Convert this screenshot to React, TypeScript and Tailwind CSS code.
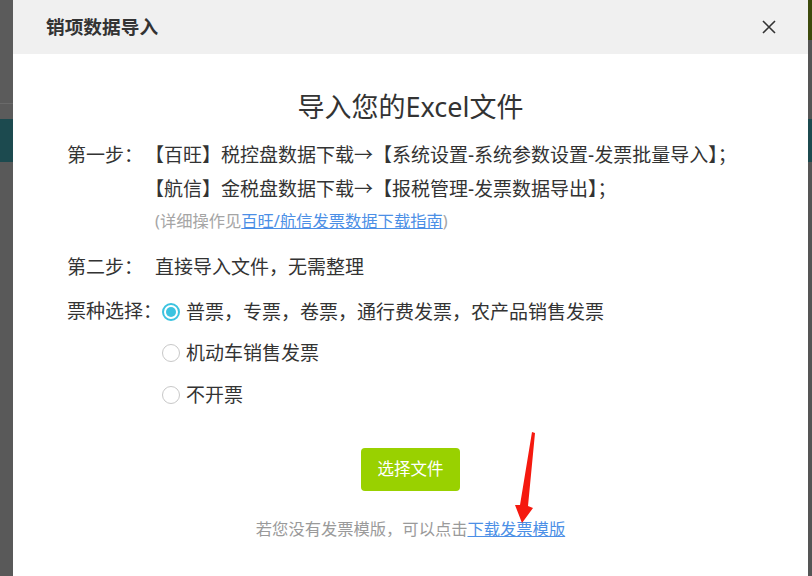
import React from "react";

const font = { fontFamily: '"Noto Sans", "Noto Sans CJK SC", sans-serif' };

function Radio({ checked }: { checked?: boolean }) {
  return checked ? (
    <span className="w-[18px] h-[18px] rounded-full border-2 border-[#3cc3e0] flex items-center justify-center shrink-0">
      <span className="w-[10px] h-[10px] rounded-full bg-[#3cc3e0]"></span>
    </span>
  ) : (
    <span className="w-[18px] h-[18px] rounded-full border border-[#c8c8c8] bg-white shrink-0"></span>
  );
}

export default function App() {
  const options = [
    { label: "普票，专票，卷票，通行费发票，农产品销售发票", checked: true },
    { label: "机动车销售发票" },
    { label: "不开票" },
  ];

  return (
    <div
      className="relative w-[812px] h-[576px] overflow-hidden flex bg-[#575757]"
      style={font}
    >
      {/* page behind the overlay */}
      <div className="w-[13px] flex flex-col">
        <div className="h-[103px] bg-[#5b5b5b]"></div>
        <div className="h-px bg-[#6a6a6a]"></div>
        <div className="h-[15px] bg-[#5b5b5b]"></div>
        <div className="h-[43px] bg-[#1c4a4f]"></div>
        <div className="flex-1 bg-[#595959]"></div>
      </div>

      <div className="w-[795px] bg-white flex flex-col text-[#333]">
        <div className="h-[54px] bg-[#f0f0f0] flex items-center justify-between pl-[33px] pr-[31px]">
          <span className="text-[18.7px] font-bold">销项数据导入</span>
          <svg width="16" height="16" viewBox="0 0 16 16" className="text-[#333]">
            <path d="M2 2 L14 14 M14 2 L2 14" stroke="currentColor" strokeWidth="1.6" />
          </svg>
        </div>

        <div className="flex flex-col pl-[54px]">
          <h1 className="mt-[35px] -ml-[54px] text-center text-[27px] leading-[36px]">
            导入您的Excel文件
          </h1>

          <div className="mt-[13px] flex text-[19px]">
            <span className="w-[78px] leading-[34px] shrink-0">第一步：</span>
            <div className="flex flex-col">
              <span className="leading-[34px]">
                【百旺】税控盘数据下载→【系统设置-系统参数设置-发票批量导入】；
              </span>
              <span className="leading-[34px]">
                【航信】金税盘数据下载→【报税管理-发票数据导出】；
              </span>
              <span className="pl-[10px] leading-[30px] text-[16.3px] text-[#a5a5a5]">
                (详细操作见
                <a className="text-[#4c8fe6] underline">百旺/航信发票数据下载指南</a>)
              </span>
            </div>
          </div>

          <div className="mt-[14px] flex text-[19px] leading-[34px]">
            <span className="w-[88px] shrink-0">第二步：</span>
            <span>直接导入文件，无需整理</span>
          </div>

          <div className="mt-[7px] flex text-[19px]">
            <span className="w-[95px] shrink-0 leading-[41.5px]">票种选择：</span>
            <div className="flex flex-col">
              {options.map((o) => (
                <label key={o.label} className="h-[41.5px] flex items-center gap-[6px]">
                  <Radio checked={o.checked} />
                  <span>{o.label}</span>
                </label>
              ))}
            </div>
          </div>
        </div>

        <div className="mt-[32px] flex justify-center">
          <button className="w-[99px] h-[43px] rounded-[4px] bg-[#99d100] text-white text-[16.5px]">
            选择文件
          </button>
        </div>

        <p className="mt-[26px] text-center text-[16.3px] leading-[24px] text-[#9a9a9a]">
          若您没有发票模版，可以点击
          <a className="text-[#4c8fe6] underline">下载发票模版</a>
        </p>
      </div>

      <div className="w-[4px] flex flex-col">
        <div className="h-[40px] bg-[#3d4a0c]"></div>
        <div className="h-[79px] bg-[#555]"></div>
        <div className="h-[43px] bg-[#1c4a4f]"></div>
        <div className="flex-1 bg-[#555]"></div>
      </div>

      {/* red annotation arrow */}
      <svg
        className="absolute inset-0 pointer-events-none"
        width="812"
        height="576"
        viewBox="0 0 812 576"
      >
        <polygon
          points="532,432 535,433 528,506 533,508 522,523 515,505 520,505"
          fill="#f5190f"
        />
      </svg>
    </div>
  );
}
